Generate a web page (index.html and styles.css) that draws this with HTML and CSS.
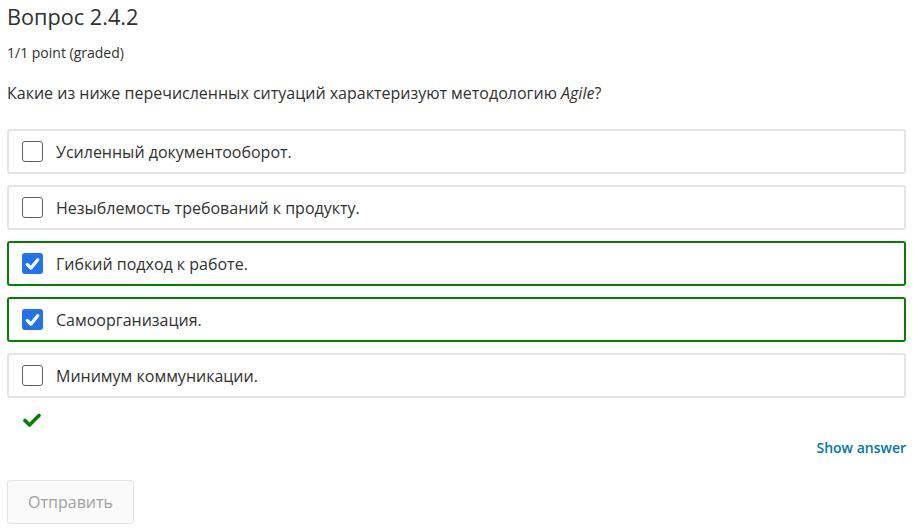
FILE: index.html
```html
<!DOCTYPE html>
<html>
<head>
<meta charset="utf-8">
<link rel="stylesheet" href="styles.css">
</head>
<body>
<div class="problem">
  <h3 class="title">Вопрос 2.4.2</h3>
  <div class="points">1/1 point (graded)</div>
  <p class="question">Какие из ниже перечисленных ситуаций характеризуют методологию <em>Agile</em>?</p>
  <div class="options">
    <label class="option"><span class="box"></span><span class="txt">Усиленный документооборот.</span></label>
    <label class="option"><span class="box"></span><span class="txt">Незыблемость требований к продукту.</span></label>
    <label class="option correct"><span class="box checked"><svg viewBox="0 0 22 22" width="22" height="22"><path d="M5.5 11.5 L9.3 15.3 L16.5 6.5" fill="none" stroke="#fff" stroke-width="3.4" stroke-linecap="round" stroke-linejoin="round"/></svg></span><span class="txt">Гибкий подход к работе.</span></label>
    <label class="option correct"><span class="box checked"><svg viewBox="0 0 22 22" width="22" height="22"><path d="M5.5 11.5 L9.3 15.3 L16.5 6.5" fill="none" stroke="#fff" stroke-width="3.4" stroke-linecap="round" stroke-linejoin="round"/></svg></span><span class="txt">Самоорганизация.</span></label>
    <label class="option"><span class="box"></span><span class="txt">Минимум коммуникации.</span></label>
  </div>
  <div class="status"><svg viewBox="0 0 18 14" width="18" height="14"><path d="M2 7.5 L6.5 12 L16 2.5" fill="none" stroke="#008100" stroke-width="3.6" stroke-linecap="round" stroke-linejoin="round"/></svg></div>
  <div class="actions-top"><a class="show-answer">Show answer</a></div>
  <div class="actions"><button class="submit">Отправить</button></div>
</div>
</body>
</html>
```
FILE: styles.css
```css
html, body { margin: 0; padding: 0; background: #fff; }
body { font-family: "Open Sans", "DejaVu Sans", sans-serif; color: #313131; }
.problem { padding: 0 8px 0 7px; }
.title { margin: 0; padding-top: 3px; font-size: 21.7px; font-weight: 400; line-height: 28px; color: #313131; }
.points { margin-top: 13px; font-size: 14px; line-height: 18px; color: #313131; }
.question { margin: 20px 0 0; font-size: 16px; line-height: 22px; color: #313131; }
.question em { font-style: italic; }
.options { margin-top: 25px; display: flex; flex-direction: column; gap: 11px; }
.option { display: flex; align-items: center; height: 45px; box-sizing: border-box; border: 2px solid #e4e4e4; border-radius: 3px; padding-left: 13px; }
.option.correct { border-color: #008100; }
.box { width: 21px; height: 21px; box-sizing: border-box; border: 1px solid #5f5f5f; border-radius: 3px; background: #fff; display: flex; align-items: center; justify-content: center; }
.box.checked { border: none; background: #2372f0; }
.box svg { display: block; }
.txt { margin-left: 13px; font-size: 16px; line-height: 20px; color: #313131; }
.status { margin-top: 15px; padding-left: 16px; height: 16px; }
.status svg { display: block; }
.actions-top { margin-top: 9px; display: flex; justify-content: flex-end; }
.show-answer { font-size: 14px; font-weight: 600; color: #0075b4; line-height: 20px; cursor: pointer; }
.actions { margin-top: 22px; }
.submit { font-family: "Open Sans", sans-serif; font-size: 16px; color: #a0a0a0; background: #fafafa; border: 1px solid #e3e3e3; border-radius: 3px; width: 127px; height: 44px; padding: 0; }
```
